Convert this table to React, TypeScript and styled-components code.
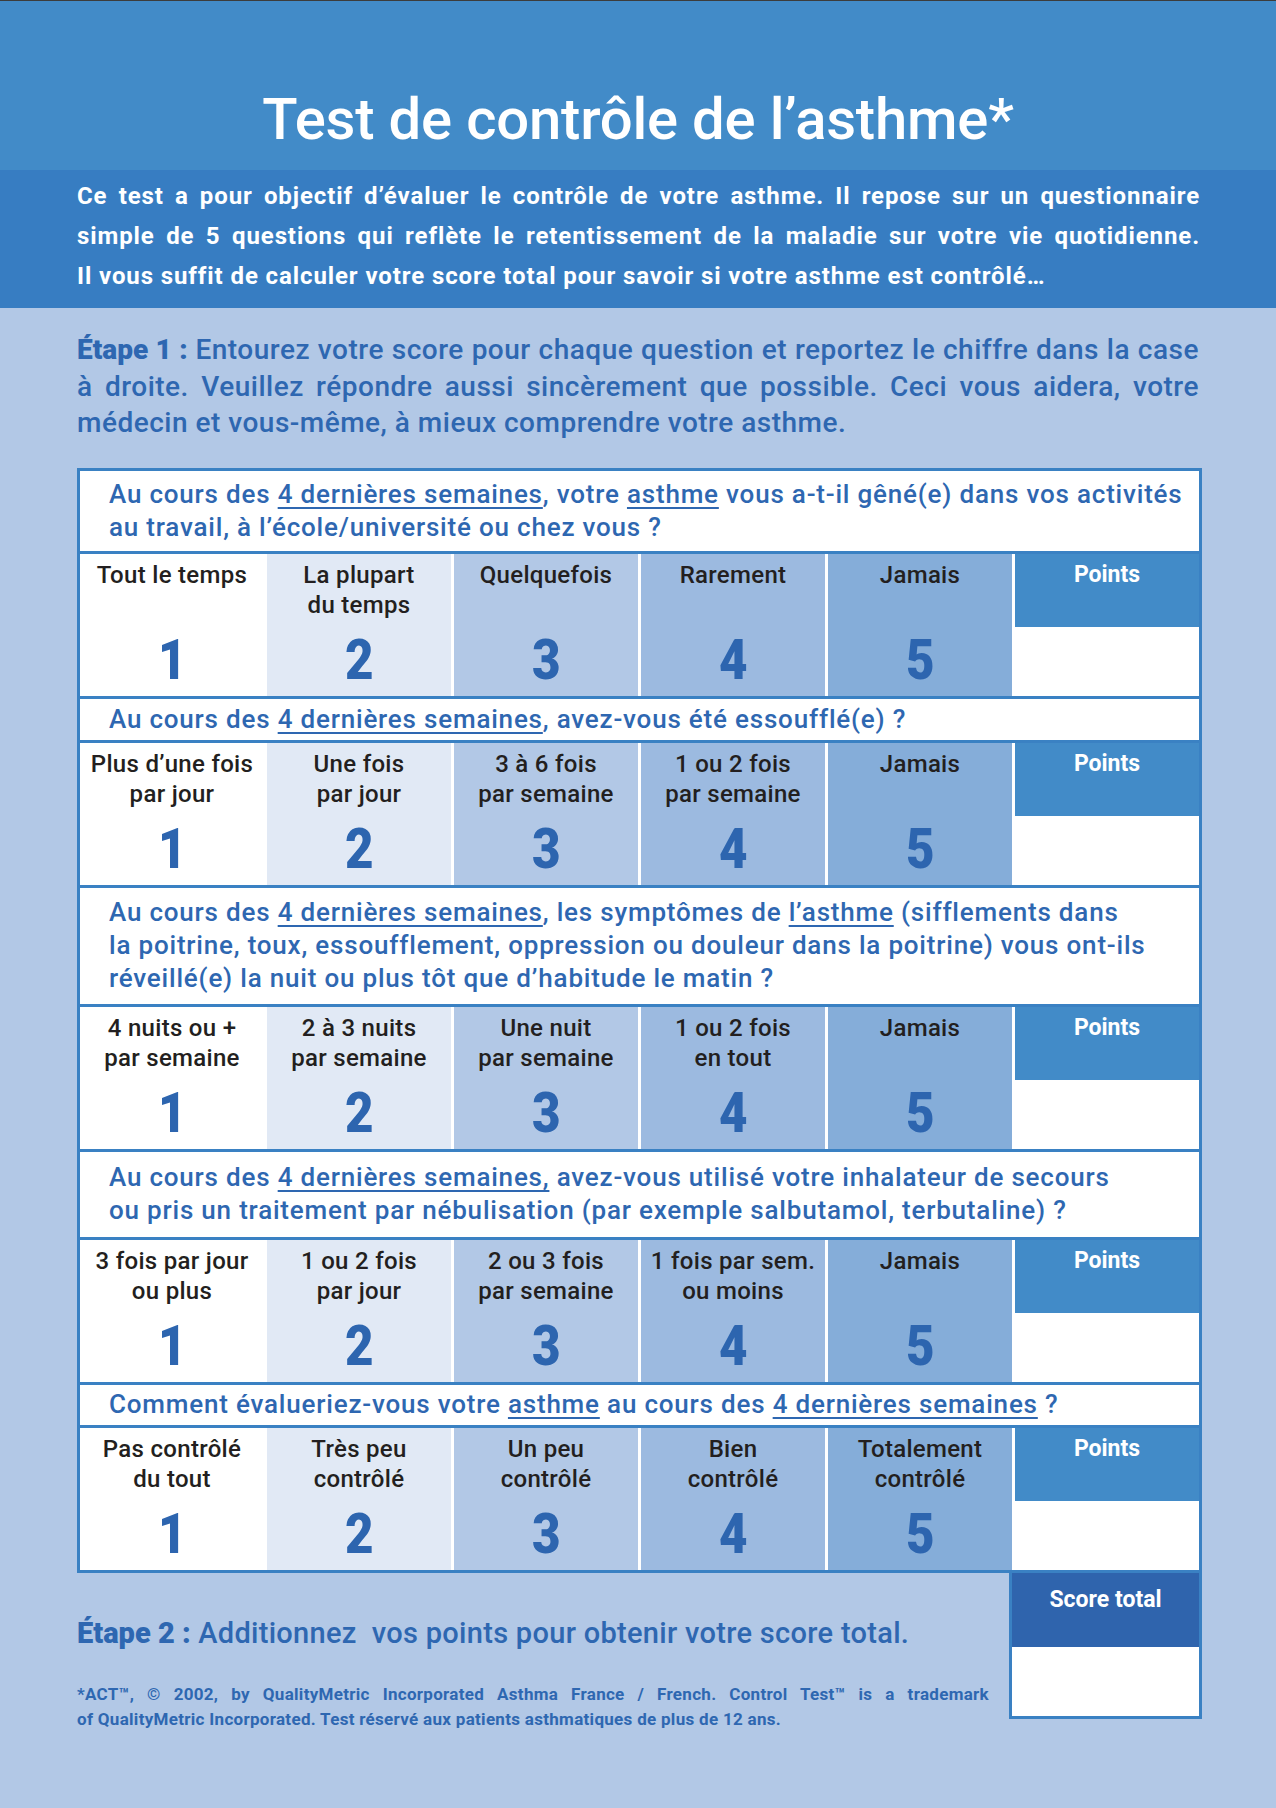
import { FC, Fragment, ReactNode } from "react";
import styled, { createGlobalStyle } from "styled-components";

const GlobalStyle = createGlobalStyle`
  html, body {
    margin: 0;
    padding: 0;
    background: #b2c8e6;
  }
  body {
    font-family: Roboto, "Liberation Sans", Arial, sans-serif;
  }
`;

const BLUE = "#2e67b1";
const BORDER = "#3a81c3";

type Question = {
	height: number;
	text: ReactNode;
	answers: string[];
};

const U: FC<{ children: ReactNode }> = ({ children }) => <Under>{children}</Under>;

const questions: Question[] = [
	{
		height: 80,
		text: (
			<>
				Au cours des <U>4 dernières semaines</U>, votre <U>asthme</U> vous a-t-il gêné(e) dans vos activités
				<br />
				au travail, à l’école/université ou chez vous ?
			</>
		),
		answers: ["Tout le temps", "La plupart\ndu temps", "Quelquefois", "Rarement", "Jamais"],
	},
	{
		height: 41,
		text: (
			<>
				Au cours des <U>4 dernières semaines</U>, avez-vous été essoufflé(e) ?
			</>
		),
		answers: ["Plus d’une fois\npar jour", "Une fois\npar jour", "3 à 6 fois\npar semaine", "1 ou 2 fois\npar semaine", "Jamais"],
	},
	{
		height: 116,
		text: (
			<>
				Au cours des <U>4 dernières semaines</U>, les symptômes de <U>l’asthme</U> (sifflements dans
				<br />
				la poitrine, toux, essoufflement, oppression ou douleur dans la poitrine) vous ont-ils
				<br />
				réveillé(e) la nuit ou plus tôt que d’habitude le matin ?
			</>
		),
		answers: ["4 nuits ou +\npar semaine", "2 à 3 nuits\npar semaine", "Une nuit\npar semaine", "1 ou 2 fois\nen tout", "Jamais"],
	},
	{
		height: 85,
		text: (
			<>
				Au cours des <U>4 dernières semaines,</U> avez-vous utilisé votre inhalateur de secours
				<br />
				ou pris un traitement par nébulisation (par exemple salbutamol, terbutaline) ?
			</>
		),
		answers: ["3 fois par jour\nou plus", "1 ou 2 fois\npar jour", "2 ou 3 fois\npar semaine", "1 fois par sem.\nou moins", "Jamais"],
	},
	{
		height: 40,
		text: (
			<>
				Comment évalueriez-vous votre <U>asthme</U> au cours des <U>4 dernières semaines</U> ?
			</>
		),
		answers: ["Pas contrôlé\ndu tout", "Très peu\ncontrôlé", "Un peu\ncontrôlé", "Bien\ncontrôlé", "Totalement\ncontrôlé"],
	},
];

const columnColors = ["#ffffff", "#e1e9f5", "#b2c8e6", "#9cbae0", "#85add9"];

const App: FC = () => {
	return (
		<Page>
			<GlobalStyle />
			<TitleBand>
				<Title>Test de contrôle de l’asthme*</Title>
			</TitleBand>
			<IntroBand>
				<JLine>Ce test a pour objectif d’évaluer le contrôle de votre asthme. Il repose sur un questionnaire</JLine>
				<JLine>simple de 5 questions qui reflète le retentissement de la maladie sur votre vie quotidienne.</JLine>
				<JLine $last>Il vous suffit de calculer votre score total pour savoir si votre asthme est contrôlé…</JLine>
			</IntroBand>
			<Main>
				<StepText>
					<JLine>
						<StepLabel>Étape 1 :</StepLabel> Entourez votre score pour chaque question et reportez le chiffre dans la case
					</JLine>
					<JLine>à droite. Veuillez répondre aussi sincèrement que possible. Ceci vous aidera, votre</JLine>
					<JLine $last>médecin et vous-même, à mieux comprendre votre asthme.</JLine>
				</StepText>

				<Table>
					{questions.map((q, qi) => (
						<Fragment key={qi}>
							<QuestionRow $h={q.height}>
								<QuestionText>{q.text}</QuestionText>
							</QuestionRow>
							<AnswerRow>
								{q.answers.map((a, i) => (
									<AnswerCell key={i} $bg={columnColors[i]}>
										<AnswerLabel>{a}</AnswerLabel>
										<Score>{i + 1}</Score>
									</AnswerCell>
								))}
								<PointsCell>
									<PointsHead>Points</PointsHead>
								</PointsCell>
							</AnswerRow>
						</Fragment>
					))}
				</Table>

				<Bottom>
					<BottomText>
						<Step2>
							<StepLabel>Étape 2 :</StepLabel> Additionnez&nbsp; vos points pour obtenir votre score total.
						</Step2>
						<Footer>
							<JLine>
								*ACT™, © 2002, by QualityMetric Incorporated Asthma France / French. Control Test™ is a trademark
							</JLine>
							<JLine $last>
								of QualityMetric Incorporated. Test réservé aux patients asthmatiques de plus de 12 ans.
							</JLine>
						</Footer>
					</BottomText>
					<ScoreBox>
						<ScoreHead>Score total</ScoreHead>
						<ScoreBlank />
					</ScoreBox>
				</Bottom>
			</Main>
		</Page>
	);
};

const Page = styled.div`
	width: 1276px;
	min-height: 1808px;
	background: #b2c8e6;
	font-family: Roboto, "Liberation Sans", Arial, sans-serif;
`;

const TitleBand = styled.header`
	box-sizing: border-box;
	height: 170px;
	padding-top: 89px;
	border-top: 1px solid #3c3c3c;
	background: #428bc8;
	display: flex;
	justify-content: center;
`;

const Title = styled.h1`
	margin: 0;
	font-size: 58px;
	line-height: 1;
	font-weight: 500;
	color: #ffffff;
	letter-spacing: -0.2px;
`;

const IntroBand = styled.section`
	box-sizing: border-box;
	height: 138px;
	padding: 6px 76px 0 77px;
	background: #377dc2;
	color: #ffffff;
	font-size: 24px;
	line-height: 40px;
	font-weight: 700;
	letter-spacing: 0.9px;
`;

const JLine = styled.div<{ $last?: boolean }>`
	white-space: nowrap;
	text-align: ${(p) => (p.$last ? "left" : "justify")};
	text-align-last: ${(p) => (p.$last ? "left" : "justify")};
`;

const Main = styled.main`
	padding: 24px 74px 0 77px;
`;

const StepText = styled.div`
	color: ${BLUE};
	font-size: 28px;
	line-height: 36.5px;
	font-weight: 500;
	letter-spacing: 0.5px;
	padding-right: 3px;
`;

const StepLabel = styled.span`
	font-weight: 900;
	letter-spacing: 0;
`;

const Table = styled.div`
	margin-top: 26px;
	border: 3px solid ${BORDER};
	background: ${BORDER};
	display: flex;
	flex-direction: column;
	gap: 3px;
`;

const QuestionRow = styled.div<{ $h: number }>`
	height: ${(p) => p.$h}px;
	background: #ffffff;
	display: flex;
	align-items: center;
	padding-left: 29px;
`;

const QuestionText = styled.div`
	color: ${BLUE};
	font-size: 26px;
	line-height: 33px;
	font-weight: 500;
	letter-spacing: 0.8px;
	white-space: nowrap;
`;

const Under = styled.span`
	text-decoration: underline;
	text-decoration-thickness: 2px;
	text-underline-offset: 4px;
`;

const AnswerRow = styled.div`
	height: 142px;
	background: #ffffff;
	display: grid;
	grid-template-columns: repeat(5, 184px) 1fr;
	column-gap: 3px;
`;

const AnswerCell = styled.div<{ $bg: string }>`
	background: ${(p) => p.$bg};
	display: flex;
	flex-direction: column;
	justify-content: space-between;
	align-items: center;
	padding: 6px 0 8px;
`;

const AnswerLabel = styled.div`
	color: #231f20;
	font-size: 24px;
	line-height: 30px;
	font-weight: 500;
	letter-spacing: 0.3px;
	text-align: center;
	white-space: pre-line;
`;

const Score = styled.div`
	color: #2d65af;
	font-size: 56px;
	line-height: 1;
	font-weight: 900;
	transform: scaleX(0.88);
`;

const PointsCell = styled.div`
	background: #ffffff;
`;

const PointsHead = styled.div`
	box-sizing: border-box;
	height: 73px;
	padding-top: 6px;
	background: #428bc8;
	color: #ffffff;
	font-size: 23px;
	line-height: 30px;
	font-weight: 700;
	text-align: center;
`;

const Bottom = styled.div`
	display: flex;
	justify-content: space-between;
	align-items: flex-start;
`;

const BottomText = styled.div`
	width: 912px;
	padding-top: 43px;
`;

const Step2 = styled.div`
	color: ${BLUE};
	font-size: 29px;
	line-height: 34px;
	font-weight: 500;
	letter-spacing: 0.3px;
	white-space: nowrap;
`;

const Footer = styled.div`
	margin-top: 32px;
	color: ${BLUE};
	font-size: 17px;
	line-height: 25px;
	font-weight: 700;
	letter-spacing: 0.3px;
`;

const ScoreBox = styled.div`
	width: 187px;
	margin-top: -3px;
	border: 3px solid ${BORDER};
`;

const ScoreHead = styled.div`
	box-sizing: border-box;
	height: 74px;
	padding-top: 12px;
	background: #2f64ad;
	color: #ffffff;
	font-size: 23px;
	line-height: 30px;
	font-weight: 700;
	text-align: center;
`;

const ScoreBlank = styled.div`
	height: 69px;
	background: #ffffff;
`;

export default App;
